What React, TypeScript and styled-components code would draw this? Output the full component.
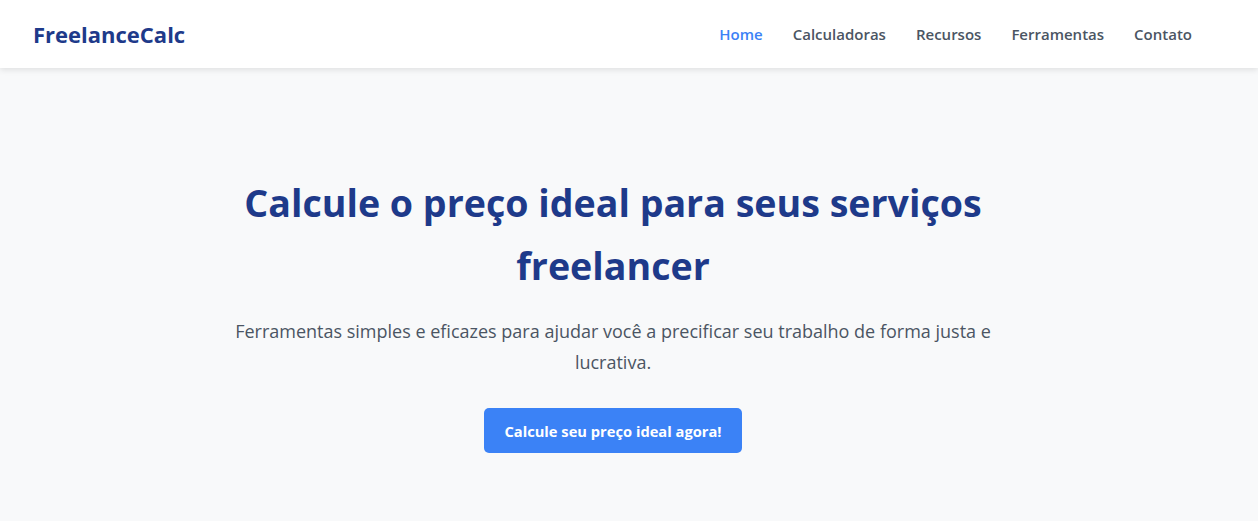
import React from "react";
import styled, { createGlobalStyle } from "styled-components";

const Global = createGlobalStyle`
  * { box-sizing: border-box; }
  body {
    margin: 0;
    background: #f8f9fa;
    font-family: "Open Sans", "Noto Sans", sans-serif;
  }
`;

const Header = styled.header`
  height: 68px;
  background: #ffffff;
  box-shadow: 0 2px 6px rgba(0, 0, 0, 0.1);
  display: flex;
  align-items: center;
  justify-content: space-between;
  padding: 0 66px 0 33px;
  position: relative;
  z-index: 1;
`;

const Logo = styled.div`
  font-size: 22px;
  font-weight: 700;
  color: #1e3a8a;
`;

const Nav = styled.nav`
  display: flex;
  gap: 30px;
`;

const NavLink = styled.a<{ $active?: boolean }>`
  font-size: 15px;
  font-weight: 600;
  text-decoration: none;
  color: ${(p) => (p.$active ? "#3b82f6" : "#4b5563")};
`;

const Hero = styled.section`
  display: flex;
  flex-direction: column;
  align-items: center;
  text-align: center;
  padding: 103px 52px 68px 20px;
`;

const Title = styled.h1`
  margin: 0;
  max-width: 800px;
  font-size: 37.6px;
  line-height: 63px;
  font-weight: 700;
  color: #1e3a8a;
`;

const Subtitle = styled.p`
  margin: 19px 0 0;
  max-width: 800px;
  font-size: 18px;
  line-height: 31px;
  color: #4b5563;
`;

const Button = styled.a`
  margin-top: 30px;
  display: inline-flex;
  align-items: center;
  height: 45px;
  padding: 0 20px;
  background: #3b82f6;
  color: #ffffff;
  border-radius: 5px;
  font-size: 14.7px;
  font-weight: 700;
  text-decoration: none;
`;

export default function App() {
  return (
    <>
      <Global />
      <Header>
        <Logo>FreelanceCalc</Logo>
        <Nav>
          <NavLink $active href="#">Home</NavLink>
          <NavLink href="#">Calculadoras</NavLink>
          <NavLink href="#">Recursos</NavLink>
          <NavLink href="#">Ferramentas</NavLink>
          <NavLink href="#">Contato</NavLink>
        </Nav>
      </Header>
      <Hero>
        <Title>Calcule o preço ideal para seus serviços freelancer</Title>
        <Subtitle>
          Ferramentas simples e eficazes para ajudar você a precificar seu trabalho de forma justa e lucrativa.
        </Subtitle>
        <Button href="#">Calcule seu preço ideal agora!</Button>
      </Hero>
    </>
  );
}
